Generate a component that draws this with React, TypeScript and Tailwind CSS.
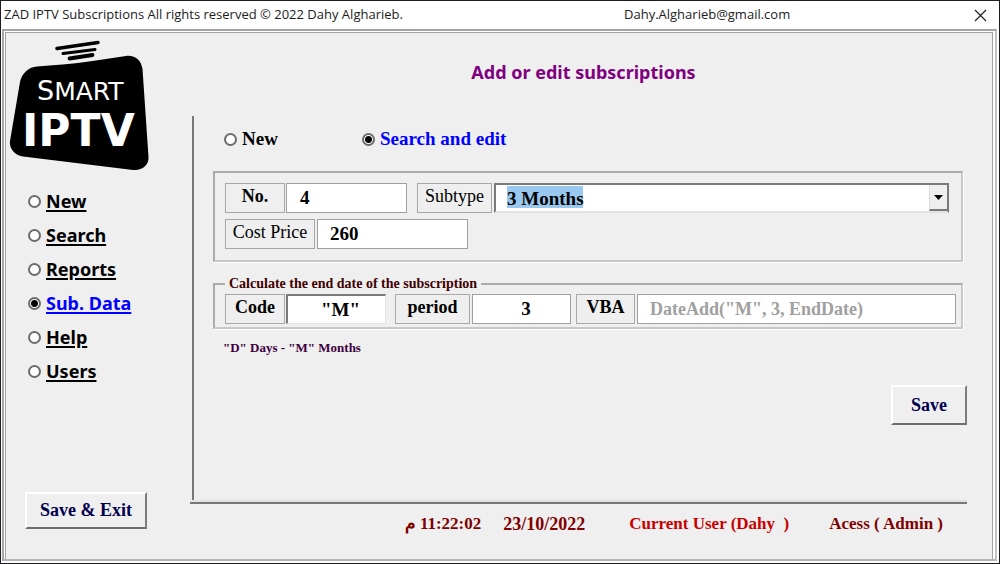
import { useState } from "react";
import type { ReactNode } from "react";

const navItems = ["New", "Search", "Reports", "Sub. Data", "Help", "Users"];

const radioClass =
  "size-[13px] shrink-0 appearance-none rounded-full border-2 border-[#6b6b6b] bg-white checked:bg-[radial-gradient(circle,#000_0_3px,#fff_4px)]";
const raisedClass =
  "border-t-2 border-l-2 border-r-2 border-b-2 border-t-white border-l-white border-r-[#7c7c7c] border-b-[#6e6e6e] bg-[#efefef] text-[18px] font-bold text-[#00004d]";
const fieldClass =
  "h-[30px] min-w-0 border border-[#a0a0a0] bg-white text-[19px] font-bold text-black outline-none";
const groupClass =
  "border-2 border-t-[#ababab] border-r-[#c8c8c8] border-b-[#c8c8c8] border-l-[#ababab] shadow-[1px_1px_0_#fff]";

function Caption({ htmlFor, className, children }: { htmlFor: string; className: string; children: ReactNode }) {
  return (
    <label
      htmlFor={htmlFor}
      className={`h-[30px] shrink-0 border border-[#a8a8a8] text-center text-[18px] leading-[25px] whitespace-nowrap text-black ${className}`}
    >
      {children}
    </label>
  );
}

function Logo() {
  return (
    <svg viewBox="0 0 142 134" className="h-[134px] w-[142px]" role="img" aria-label="Smart IPTV">
      <g stroke="#000" strokeLinecap="round">
        <path d="M48 10.500L89 4.500" strokeWidth="3.500" />
        <path d="M54 15.500L86 11.500" strokeWidth="3" />
        <path d="M60.500 20.500L83.500 17" strokeWidth="3.800" />
      </g>
      <path d="M28 28.500C45 27 62 26 80 23.500L117 18C126 17 132 22 133.500 31L139.500 119C140 127 133 133 124 132L14 118.500C5 117 0 110 1 103L11 44C13 35 20 29 28 28.500Z" />
      <text x="28" y="62" fill="#fff" fontFamily="DejaVu Sans, sans-serif" fontSize="27">
        S<tspan fontSize="25">MART</tspan>
      </text>
      <text x="13" y="108" fill="#fff" fontFamily="DejaVu Sans, sans-serif" fontSize="44" fontWeight="bold">
        IPTV
      </text>
    </svg>
  );
}

export default function App() {
  const [page, setPage] = useState("Sub. Data");
  const [mode, setMode] = useState("edit");

  return (
    <div className="flex min-h-screen flex-col border border-[#1e1c22] bg-white font-['Liberation_Serif',serif]">
      <header className="flex h-7 items-center justify-between pr-3 pl-[3px] font-['Open_Sans',sans-serif] text-[13px] text-[#1c1c1c]">
        <h1 className="flex-[620] whitespace-nowrap">ZAD IPTV Subscriptions All rights reserved © 2022 Dahy Algharieb.</h1>
        <span className="flex-[350]">Dahy.Algharieb@gmail.com</span>
        <button type="button" aria-label="Close">
          <svg viewBox="0 0 13 13" className="size-[13px]" stroke="#222" strokeWidth="1.200">
            <path d="M1 1L12 12M12 1L1 12" />
          </svg>
        </button>
      </header>

      <div className="mr-[2px] mb-[2px] ml-px flex grow border-2 border-t-[#a3a3a3] border-r-[#c4c4c4] border-b-[#b4b4b4] border-l-[#a8a4a6] bg-white pt-px pr-[2px] pl-px">
        <div className="flex grow border-t border-r border-l border-[#a3a3a3] bg-[#efefef]">
          <aside className="flex w-[184px] shrink-0 flex-col items-start pb-[30px] pl-[3px]">
            <div className="mt-[5px]">
              <Logo />
            </div>
            <nav aria-label="Sections" className="mt-3 ml-[19px] flex flex-col font-['Noto_Sans',sans-serif]">
              {navItems.map((item) => (
                <label
                  key={item}
                  className="flex h-[34px] items-center gap-[5px] text-[18px] font-bold text-black underline decoration-2 underline-offset-2 has-checked:text-[#0000ff]"
                >
                  <input
                    type="radio"
                    name="page"
                    checked={page === item}
                    onChange={() => setPage(item)}
                    className={radioClass}
                  />
                  {item}
                </label>
              ))}
            </nav>
            <button type="button" className={`mt-auto ml-4 h-[37px] w-[122px] ${raisedClass}`}>
              Save &amp; Exit
            </button>
          </aside>

          <main className="flex min-w-0 grow flex-col pr-[25px]">
            <h2 className="mt-[27px] mb-[31px] pl-[10px] text-center font-['Noto_Sans',sans-serif] text-[18px] leading-[25px] font-bold text-[#800080]">
              Add or edit subscriptions
            </h2>

            <div className="flex h-[388px] flex-col border-b-2 border-[#777777]">
              <div className="flex grow flex-col border-b-2 border-[#e2e2e2]">
                <div className="ml-[2px] flex grow flex-col border-l-2 border-[#777777] pl-[19px]">
                  <div role="radiogroup" aria-label="Mode" className="mt-[10px] ml-[11px] flex h-[26px] items-center text-[19px] font-bold">
                    <label className="flex w-[138px] items-center gap-[5px] has-checked:text-[#0000ff]">
                      <input
                        type="radio"
                        name="mode"
                        checked={mode === "new"}
                        onChange={() => setMode("new")}
                        className={radioClass}
                      />
                      New
                    </label>
                    <label className="flex items-center gap-[5px] has-checked:text-[#0000ff]">
                      <input
                        type="radio"
                        name="mode"
                        checked={mode === "edit"}
                        onChange={() => setMode("edit")}
                        className={radioClass}
                      />
                      Search and edit
                    </label>
                  </div>

                  <section className={`mt-[19px] mr-1 flex h-[91px] flex-col gap-[6px] pt-[10px] pr-3 pl-[10px] ${groupClass}`}>
                    <div className="flex">
                      <Caption htmlFor="number" className="w-[60px] font-bold">No.</Caption>
                      <input id="number" defaultValue="4" className={`ml-px w-[121px] pl-[13px] ${fieldClass}`} />
                      <Caption htmlFor="subtype" className="ml-[10px] w-[75px]">Subtype</Caption>
                      <div className="relative ml-[2px] grow">
                        <select
                          id="subtype"
                          defaultValue="3"
                          className="h-[30px] w-full appearance-none border-2 border-t-[#7a7a7a] border-r-[#7a7a7a] border-b-[#e3e3e3] border-l-[#7a7a7a] bg-white bg-[linear-gradient(#99c9ef,#99c9ef)] bg-[length:76px_22px] bg-[position:11px_1px] bg-no-repeat pl-[11px] text-[19px] font-bold text-black outline-none"
                        >
                          <option value="1">1 Month</option>
                          <option value="3">3 Months</option>
                          <option value="6">6 Months</option>
                        </select>
                        <span className="pointer-events-none absolute top-[2px] right-0 flex h-[26px] w-5 items-center justify-center border-r-2 border-b-2 border-l border-r-[#7a7a7a] border-b-[#7a7a7a] border-l-[#dcdcdc] bg-[#efefef]">
                          <svg viewBox="0 0 9 5" className="h-[5px] w-[9px]">
                            <path d="M0 0H9L4.500 5Z" />
                          </svg>
                        </span>
                      </div>
                    </div>
                    <div className="flex">
                      <Caption htmlFor="cost" className="w-[90px]">Cost Price</Caption>
                      <input id="cost" defaultValue="260" className={`ml-[2px] w-[151px] pl-[12px] ${fieldClass}`} />
                    </div>
                  </section>

                  <fieldset className={`mt-[12px] mr-1 h-[55px] pr-[5px] pl-[10px] ${groupClass}`}>
                    <legend className="px-1 text-[14px] leading-[20px] font-bold text-[#400000]">
                      Calculate the end date of the subscription
                    </legend>
                    <div className="flex">
                      <Caption htmlFor="code" className="w-[60px] font-bold">Code</Caption>
                      <input
                        id="code"
                        defaultValue={'"M"'}
                        className="ml-px h-[30px] w-[100px] border-t-2 border-l-2 border-r border-b border-t-[#7a7a7a] border-r-[#e3e3e3] border-b-[#e3e3e3] border-l-[#7a7a7a] bg-white pl-2 text-center text-[19px] font-bold outline-none"
                      />
                      <Caption htmlFor="period" className="ml-[9px] w-[75px] font-bold">period</Caption>
                      <input id="period" defaultValue="3" className={`ml-[2px] w-[99px] pl-[9px] text-center ${fieldClass}`} />
                      <Caption htmlFor="vba" className="ml-[5px] w-[59px] font-bold">VBA</Caption>
                      <input
                        id="vba"
                        disabled
                        defaultValue={'DateAdd("M", 3, EndDate)'}
                        className="ml-[2px] h-[30px] min-w-0 grow border border-[#a0a0a0] bg-white pl-[12px] text-[18px] font-bold text-[#a0a0a0]"
                      />
                    </div>
                  </fieldset>

                  <p className="mt-[10px] ml-[10px] text-[13px] leading-[18px] font-bold text-[#400040]">
                    "D" Days - "M" Months
                  </p>
                  <button type="button" className={`mt-[28px] h-10 w-[76px] self-end ${raisedClass}`}>
                    Save
                  </button>
                </div>
              </div>
            </div>

            <footer className="mt-[7px] flex h-[26px] items-center justify-end pr-6 text-[17px] font-bold whitespace-pre text-[#800000]">
              <time dir="rtl" className="text-[17px]">11:22:02 م</time>
              <time className="ml-[22px] text-[18px]">23/10/2022</time>
              <span className="ml-11 text-[#c80000]">Current User (Dahy  )</span>
              <span className="ml-10">Acess ( Admin )</span>
            </footer>
          </main>
        </div>
      </div>
    </div>
  );
}
